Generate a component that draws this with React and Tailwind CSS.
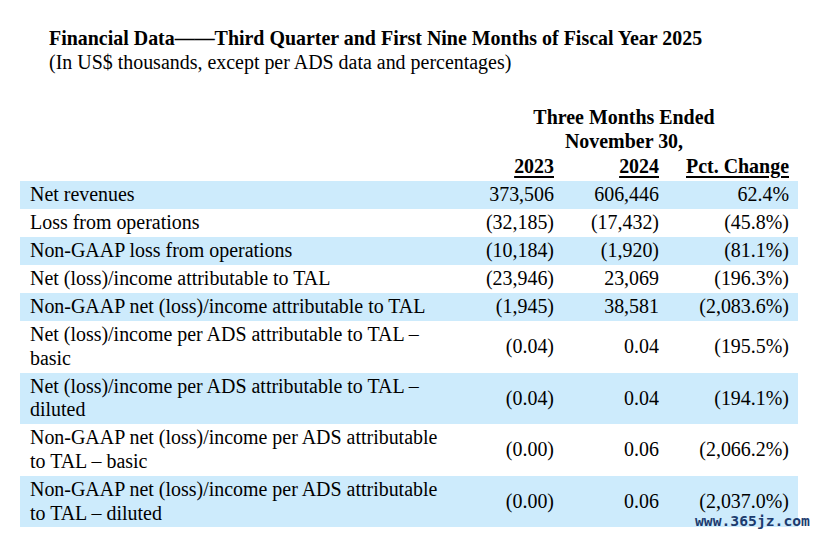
import React from "react";

const rows = [
  ["Net revenues", "373,506", "606,446", "62.4%"],
  ["Loss from operations", "(32,185)", "(17,432)", "(45.8%)"],
  ["Non-GAAP loss from operations", "(10,184)", "(1,920)", "(81.1%)"],
  ["Net (loss)/income attributable to TAL", "(23,946)", "23,069", "(196.3%)"],
  ["Non-GAAP net (loss)/income attributable to TAL", "(1,945)", "38,581", "(2,083.6%)"],
  ["Net (loss)/income per ADS attributable to TAL – basic", "(0.04)", "0.04", "(195.5%)"],
  ["Net (loss)/income per ADS attributable to TAL – diluted", "(0.04)", "0.04", "(194.1%)"],
  ["Non-GAAP net (loss)/income per ADS attributable to TAL – basic", "(0.00)", "0.06", "(2,066.2%)"],
  ["Non-GAAP net (loss)/income per ADS attributable to TAL – diluted", "(0.00)", "0.06", "(2,037.0%)"],
];

export default function App() {
  return (
    <div
      className="relative w-[818px] h-[539px] bg-white text-black overflow-hidden"
      style={{ fontFamily: '"Liberation Serif", "Times New Roman", serif' }}
    >
      <div className="pl-[49px] pt-[27px] text-[19.95px] leading-[23px]">
        <div className="font-bold">
          Financial Data——Third Quarter and First Nine Months of Fiscal Year 2025
        </div>
        <div className="mt-[0.5px]">(In US$ thousands, except per ADS data and percentages)</div>
      </div>

      <div className="mx-[20px] w-[778px] mt-[31px]">
        <div className="grid grid-cols-[430px_104px_105px_139px] font-bold text-[19.95px]">
          <div />
          <div className="col-span-3 text-center leading-[24.5px]">
            <div>Three Months Ended</div>
            <div>November 30,</div>
          </div>
          <div />
          <div className="text-right leading-[21px] mt-[2px]">
            <span className="underline decoration-2 underline-offset-[3px]">2023</span>
          </div>
          <div className="text-right leading-[21px] mt-[2px]">
            <span className="underline decoration-2 underline-offset-[3px]">2024</span>
          </div>
          <div className="text-right pr-[9px] leading-[21px] mt-[2px]">
            <span className="underline decoration-2 underline-offset-[3px]">Pct. Change</span>
          </div>
        </div>

        <div className="mt-[4px] text-[19.95px] leading-[23.5px]">
          {rows.map((r, i) => (
            <div
              key={i}
              className={
                "grid grid-cols-[430px_104px_105px_139px] items-center py-[2.3px] " +
                (i % 2 === 0 ? "bg-[#cdebfc]" : "bg-white")
              }
            >
              <div className="pl-[10px] pr-[3px]">{r[0]}</div>
              <div className="text-right">{r[1]}</div>
              <div className="text-right">{r[2]}</div>
              <div className="text-right pr-[9px]">{r[3]}</div>
            </div>
          ))}
        </div>
      </div>

      <div
        className="absolute left-[695px] top-[512px] text-[14.7px] font-bold text-[#1c3b6e] leading-[18px]"
        style={{ fontFamily: '"DejaVu Sans Mono", "Liberation Mono", monospace' }}
      >
        www.365jz.com
      </div>
    </div>
  );
}
